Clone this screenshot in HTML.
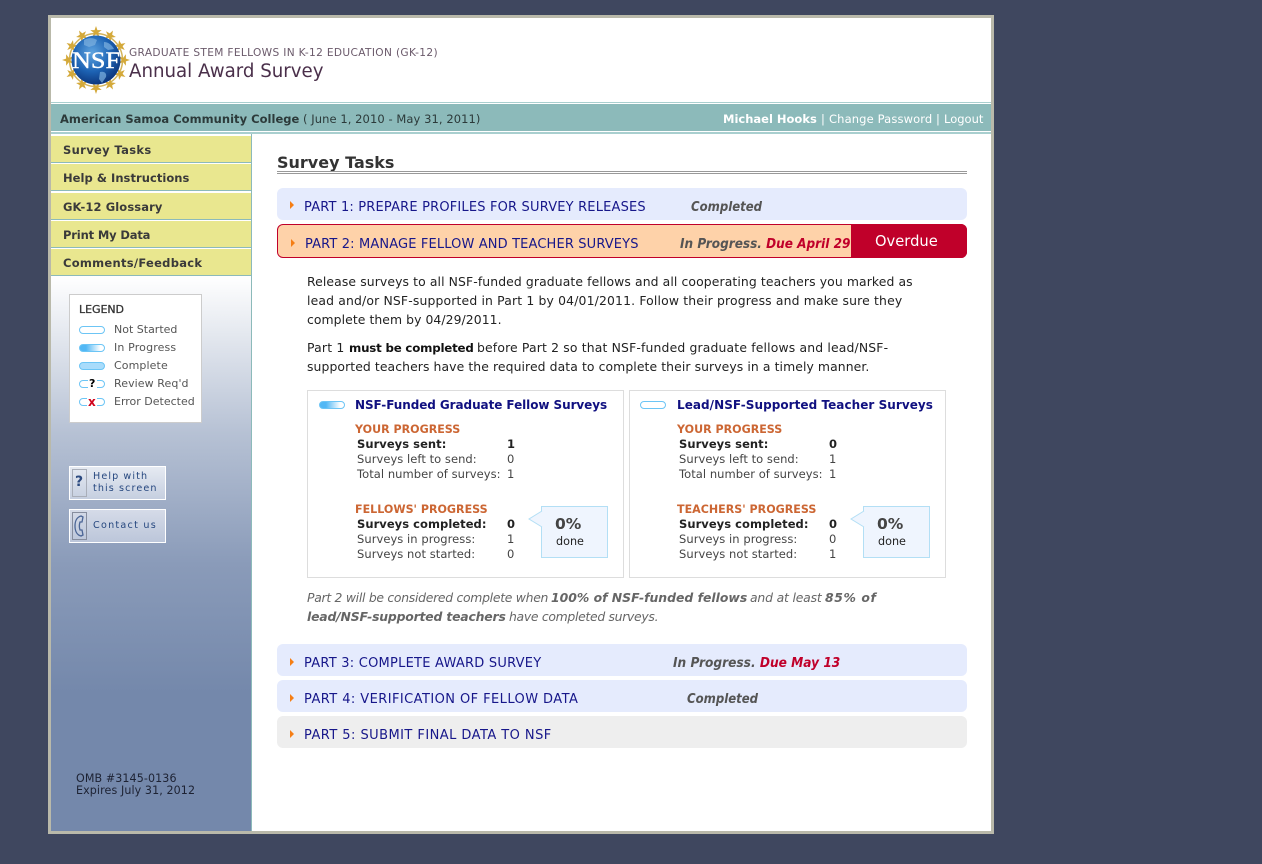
<!DOCTYPE html>
<html><head><meta charset="utf-8"><title>Annual Award Survey</title>
<style>
html,body{margin:0;padding:0;width:1262px;height:864px;overflow:hidden;background:#3f475f}
body{position:relative;font-family:"DejaVu Sans",Verdana,"Liberation Sans",sans-serif;color:#333}
div,span.t,a.t{position:absolute}
.t{white-space:nowrap;line-height:16px;display:block;text-decoration:none}
b{font-weight:bold}
.nav{left:63px;font-size:11.5px;font-weight:bold;color:#3a3a3a}
.yl{left:51px;width:200px;height:26px;background:#e9e78f;border-bottom:1px solid #8cbaba}
.lg{left:114px;font-size:11px;color:#555}
.pill{width:24px;height:6px;border:1px solid #6cc5f5;border-radius:4px;background:#fff}
.full{background:#a9dcfb}
.prog{background:linear-gradient(90deg,#52b8f5,#52b8f5 25%,#fff 85%)}
.bar{left:277px;width:690px;height:32px;border-radius:6px;background:#e5ebfd}
.pt{font-size:13px;color:#17178a}
.arr{width:0;height:0;border-left:4px solid #f57e14;border-top:4px solid transparent;border-bottom:4px solid transparent}
.st{font-size:13px;font-weight:bold;font-style:italic;color:#555;transform-origin:0 50%}
.red{color:#c0002a}
.p{font-size:12.4px;color:#222}
.card{top:390px;width:315px;height:186px;border:1px solid #ddd;background:#fff}
.ct{font-size:12px;font-weight:bold;color:#101080}
.or{font-size:11.1px;font-weight:bold;color:#cc6633}
.r{font-size:11.5px;color:#444;letter-spacing:.05px}
.rb{font-size:11.5px;font-weight:bold;color:#222;letter-spacing:.05px}
.note{font-size:12.4px;font-style:italic;color:#666}
.bub{top:506px;width:65px;height:50px;border:1px solid #b3dff5;background:#eff5fe}
</style></head><body>

<div style="left:48px;top:15px;width:940px;height:813px;border:3px solid #b9b9aa;background:#fff"></div>

<!-- header -->
<svg style="position:absolute;left:62px;top:26px" width="68" height="68" viewBox="0 0 68 68">
<defs><radialGradient id="g" cx="42%" cy="35%" r="70%"><stop offset="0" stop-color="#5fa4e0"/><stop offset=".55" stop-color="#1d63b4"/><stop offset="1" stop-color="#0a2f74"/></radialGradient>
<polygon id="s" points="34,0 35.4,4.1 39.7,4.1 36.1,6.9 37.5,11 34,8.4 30.5,11 31.9,6.9 28.3,4.1 32.6,4.1"/></defs>
<circle cx="34" cy="34" r="26.5" fill="none" stroke="#d4b45a" stroke-width="1.5"/>
<g fill="#d4a93a">
<use href="#s"/><use href="#s" transform="rotate(30 34 34)"/><use href="#s" transform="rotate(60 34 34)"/><use href="#s" transform="rotate(90 34 34)"/><use href="#s" transform="rotate(120 34 34)"/><use href="#s" transform="rotate(150 34 34)"/><use href="#s" transform="rotate(180 34 34)"/><use href="#s" transform="rotate(210 34 34)"/><use href="#s" transform="rotate(240 34 34)"/><use href="#s" transform="rotate(270 34 34)"/><use href="#s" transform="rotate(300 34 34)"/><use href="#s" transform="rotate(330 34 34)"/>
</g>
<circle cx="34" cy="34" r="24.5" fill="url(#g)"/>
<path d="M22 14c5-3 10-2 13 0l-2 5-6 2-5-2zM38 46c4-1 7 1 6 5l-4 6-3-4z M42 16c4 0 8 3 10 7l-6 1-4-3z" fill="#7fb2df" opacity=".7"/>
<text x="34" y="42" text-anchor="middle" font-family="Liberation Serif,serif" font-size="23" fill="#fff" stroke="#fff" stroke-width=".4" textLength="48" lengthAdjust="spacingAndGlyphs">NSF</text>
</svg>
<span class="t" style="left:129px;top:45px;font-size:10.6px;color:#6b5a6b;letter-spacing:.34px">GRADUATE STEM FELLOWS IN K-12 EDUCATION (GK-12)</span>
<span class="t" style="left:129px;top:62px;font-size:18.2px;line-height:20px;color:#4a2f4a">Annual Award Survey</span>

<div style="left:51px;top:102px;width:940px;height:1px;background:#a9cfcf"></div>
<div style="left:51px;top:104px;width:940px;height:27px;background:#8cbaba"></div>
<div style="left:51px;top:132px;width:940px;height:2px;background:#a9cfcf"></div>
<span class="t" style="left:60px;top:111px;font-size:11.5px;font-weight:bold;color:#2c3a3a;letter-spacing:.03px">American Samoa Community College</span>
<span class="t" style="left:303px;top:111px;font-size:11.5px;color:#2c3a3a;letter-spacing:.07px">( June 1, 2010 - May 31, 2011)</span>
<span class="t" style="left:723px;top:111px;font-size:11.5px;color:#fff;font-weight:bold">Michael Hooks</span>
<span class="t" style="left:821px;top:111px;font-size:11.5px;color:#fff">|</span>
<span class="t" style="left:829px;top:111px;font-size:11.5px;color:#fff;letter-spacing:.13px">Change Password</span>
<span class="t" style="left:936px;top:111px;font-size:11.5px;color:#fff">|</span>
<span class="t" style="left:944px;top:111px;font-size:11.5px;color:#fff">Logout</span>

<!-- sidebar -->
<div style="left:51px;top:134px;width:200px;height:697px;background:linear-gradient(180deg,#fff 0,#fff 142px,#b6c1d4 300px,#8a9bb9 430px,#7488ab 560px,#7488ab 100%);border-right:1px solid #8cbaba"></div>
<div class="yl" style="top:136px"></div>
<div class="yl" style="top:164px"></div>
<div class="yl" style="top:193px"></div>
<div class="yl" style="top:221px"></div>
<div class="yl" style="top:249px"></div>
<span class="t nav" style="top:142px;letter-spacing:.35px">Survey Tasks</span>
<span class="t nav" style="top:170px;letter-spacing:.05px">Help &amp; Instructions</span>
<span class="t nav" style="top:199px;letter-spacing:.1px">GK-12 Glossary</span>
<span class="t nav" style="top:227px;letter-spacing:-.15px">Print My Data</span>
<span class="t nav" style="top:255px;letter-spacing:.28px">Comments/Feedback</span>

<div style="left:69px;top:294px;width:131px;height:127px;background:#fff;border:1px solid #ccc"></div>
<span class="t" style="left:79px;top:302px;font-size:11px;color:#333;-webkit-text-stroke:.3px #333;letter-spacing:-.05px">LEGEND</span>
<div class="pill" style="left:79px;top:326px"></div>
<div class="pill prog" style="left:79px;top:344px"></div>
<div class="pill full" style="left:79px;top:362px"></div>
<div class="pill" style="left:79px;top:380px"></div>
<div style="left:88px;top:378px;width:9px;height:11px;background:#fff"></div>
<span class="t" style="left:89px;top:376px;font-size:11px;font-weight:bold;color:#000">?</span>
<div class="pill" style="left:79px;top:398px"></div>
<div style="left:87px;top:396px;width:10px;height:11px;background:#fff"></div>
<span class="t" style="left:88px;top:394px;font-size:12px;font-weight:bold;color:#d0021b">x</span>
<span class="t lg" style="top:322px">Not Started</span>
<span class="t lg" style="top:340px;letter-spacing:.15px">In Progress</span>
<span class="t lg" style="top:358px;letter-spacing:.1px">Complete</span>
<span class="t lg" style="top:376px;letter-spacing:.08px">Review Req'd</span>
<span class="t lg" style="top:394px">Error Detected</span>

<div style="left:69px;top:466px;width:95px;height:32px;border:1px solid #fff;background:linear-gradient(180deg,#e6eaf2,#c6cfe0)"></div>
<div style="left:72px;top:469px;width:13px;height:26px;border:1px solid #a9aeb9"></div>
<span class="t" style="left:75px;top:474px;font-size:14px;font-weight:bold;color:#2c4a80">?</span>
<span class="t" style="left:93px;top:471px;font-size:9.6px;line-height:12px;color:#26477f;letter-spacing:1.1px">Help with<br>this screen</span>
<div style="left:69px;top:509px;width:95px;height:32px;border:1px solid #fff;background:linear-gradient(180deg,#d5dbe8,#bcc6da)"></div>
<div style="left:72px;top:512px;width:13px;height:26px;border:1px solid #868d9e"></div>
<svg style="position:absolute;left:73px;top:514px" width="13" height="24" viewBox="0 0 13 24"><path d="M8 2C4 3 2 7 2 12s2 9 6 10l2-1-1-5-2 0c-1-3-1-5 0-8l2 0 1-5z" fill="none" stroke="#4b6596" stroke-width="1.3"/></svg>
<span class="t" style="left:93px;top:518px;font-size:9.6px;color:#26477f;letter-spacing:1.25px">Contact us</span>
<span class="t" style="left:76px;top:773px;font-size:11.1px;line-height:12px;color:#1d2233;letter-spacing:.1px">OMB #3145-0136<br>Expires July 31, 2012</span>

<!-- main -->
<span class="t" style="left:277px;top:153px;font-size:16px;line-height:20px;font-weight:bold;color:#333">Survey Tasks</span>
<div style="left:277px;top:171px;width:690px;height:1px;background:#999"></div>
<div style="left:277px;top:173px;width:690px;height:1px;background:#999"></div>

<div class="bar" style="top:188px"></div>
<div class="arr" style="left:290px;top:201px"></div>
<span class="t pt" style="left:304px;top:200px;letter-spacing:.18px">PART 1: PREPARE PROFILES FOR SURVEY RELEASES</span>
<span class="t st" style="left:691px;top:200px;transform:scaleX(.9)">Completed</span>

<div class="bar" style="top:224px;height:32px;border:1px solid #c0002a;width:688px;background:#fed2a9"></div>
<div style="left:851px;top:224px;width:116px;height:34px;background:#c0002a;border-radius:0 6px 6px 0"></div>
<div class="arr" style="left:291px;top:239px"></div>
<span class="t pt" style="left:305px;top:237px;letter-spacing:.14px">PART 2: MANAGE FELLOW AND TEACHER SURVEYS</span>
<span class="t st" style="left:680px;top:237px;transform:scaleX(.93)">In Progress. <span class="red">Due April 29</span></span>
<span class="t" style="left:875px;top:234px;font-size:14.7px;color:#fff">Overdue</span>

<span class="t p" style="left:307px;top:274px;letter-spacing:.106px">Release surveys to all NSF-funded graduate fellows and all cooperating teachers you marked as</span>
<span class="t p" style="left:307px;top:293px;letter-spacing:.16px">lead and/or NSF-supported in Part 1 by 04/01/2011. Follow their progress and make sure they</span>
<span class="t p" style="left:307px;top:312px;letter-spacing:.07px">complete them by 04/29/2011.</span>
<span class="t p" style="left:307px;top:340px;letter-spacing:.2px">Part 1</span>
<span class="t p" style="left:349px;top:340px;font-size:11.8px;font-weight:bold;color:#111;letter-spacing:-.2px">must be completed</span>
<span class="t p" style="left:477px;top:340px;letter-spacing:.16px">before Part 2 so that NSF-funded graduate fellows and lead/NSF-</span>
<span class="t p" style="left:307px;top:359px;letter-spacing:.09px">supported teachers have the required data to complete their surveys in a timely manner.</span>

<!-- left card -->
<div class="card" style="left:307px"></div>
<div class="pill prog" style="left:319px;top:401px"></div>
<span class="t ct" style="left:355px;top:397px;letter-spacing:-.07px">NSF-Funded Graduate Fellow Surveys</span>
<span class="t or" style="left:355px;top:422px">YOUR PROGRESS</span>
<span class="t rb" style="left:357px;top:436px">Surveys sent:</span><span class="t rb" style="left:507px;top:436px">1</span>
<span class="t r" style="left:357px;top:451px">Surveys left to send:</span><span class="t r" style="left:507px;top:451px">0</span>
<span class="t r" style="left:357px;top:466px">Total number of surveys:</span><span class="t r" style="left:507px;top:466px">1</span>
<span class="t or" style="left:355px;top:502px">FELLOWS' PROGRESS</span>
<span class="t rb" style="left:357px;top:516px">Surveys completed:</span><span class="t rb" style="left:507px;top:516px">0</span>
<span class="t r" style="left:357px;top:531px">Surveys in progress:</span><span class="t r" style="left:507px;top:531px">1</span>
<span class="t r" style="left:357px;top:546px">Surveys not started:</span><span class="t r" style="left:507px;top:546px">0</span>
<div class="bub" style="left:541px"></div>
<svg style="position:absolute;left:528px;top:511px" width="15" height="18" viewBox="0 0 15 18"><path d="M14 0L1 8l13 8" fill="#eff5fe" stroke="#b3dff5"/></svg>
<span class="t" style="left:555px;top:516px;font-size:15.5px;font-weight:bold;color:#444">0%</span>
<span class="t" style="left:556px;top:534px;font-size:11.2px;color:#222">done</span>

<!-- right card -->
<div class="card" style="left:629px"></div>
<div class="pill" style="left:640px;top:401px"></div>
<span class="t ct" style="left:677px;top:397px;letter-spacing:.05px">Lead/NSF-Supported Teacher Surveys</span>
<span class="t or" style="left:677px;top:422px">YOUR PROGRESS</span>
<span class="t rb" style="left:679px;top:436px">Surveys sent:</span><span class="t rb" style="left:829px;top:436px">0</span>
<span class="t r" style="left:679px;top:451px">Surveys left to send:</span><span class="t r" style="left:829px;top:451px">1</span>
<span class="t r" style="left:679px;top:466px">Total number of surveys:</span><span class="t r" style="left:829px;top:466px">1</span>
<span class="t or" style="left:677px;top:502px">TEACHERS' PROGRESS</span>
<span class="t rb" style="left:679px;top:516px">Surveys completed:</span><span class="t rb" style="left:829px;top:516px">0</span>
<span class="t r" style="left:679px;top:531px">Surveys in progress:</span><span class="t r" style="left:829px;top:531px">0</span>
<span class="t r" style="left:679px;top:546px">Surveys not started:</span><span class="t r" style="left:829px;top:546px">1</span>
<div class="bub" style="left:863px"></div>
<svg style="position:absolute;left:850px;top:511px" width="15" height="18" viewBox="0 0 15 18"><path d="M14 0L1 8l13 8" fill="#eff5fe" stroke="#b3dff5"/></svg>
<span class="t" style="left:877px;top:516px;font-size:15.5px;font-weight:bold;color:#444">0%</span>
<span class="t" style="left:878px;top:534px;font-size:11.2px;color:#222">done</span>

<span class="t note" style="left:307px;top:590px;letter-spacing:-.28px">Part 2 will be considered complete when</span>
<span class="t note" style="left:551px;top:590px;font-weight:bold">100% of NSF-funded fellows</span>
<span class="t note" style="left:750px;top:590px;letter-spacing:-.17px">and at least</span>
<span class="t note" style="left:825px;top:590px;font-weight:bold;letter-spacing:.6px">85% of</span>
<span class="t note" style="left:307px;top:609px;font-weight:bold;letter-spacing:-.18px">lead/NSF-supported teachers</span>
<span class="t note" style="left:509px;top:609px;letter-spacing:-.3px">have completed surveys.</span>

<div class="bar" style="top:644px"></div>
<div class="arr" style="left:290px;top:658px"></div>
<span class="t pt" style="left:304px;top:656px;letter-spacing:.24px">PART 3: COMPLETE AWARD SURVEY</span>
<span class="t st" style="left:673px;top:656px;transform:scaleX(.938)">In Progress. <span class="red">Due May 13</span></span>

<div class="bar" style="top:680px"></div>
<div class="arr" style="left:290px;top:694px"></div>
<span class="t pt" style="left:304px;top:692px;letter-spacing:.43px">PART 4: VERIFICATION OF FELLOW DATA</span>
<span class="t st" style="left:687px;top:692px;transform:scaleX(.9)">Completed</span>

<div class="bar" style="top:716px;background:#eee"></div>
<div class="arr" style="left:290px;top:730px"></div>
<span class="t pt" style="left:304px;top:728px;letter-spacing:.45px">PART 5: SUBMIT FINAL DATA TO NSF</span>
</body></html>
